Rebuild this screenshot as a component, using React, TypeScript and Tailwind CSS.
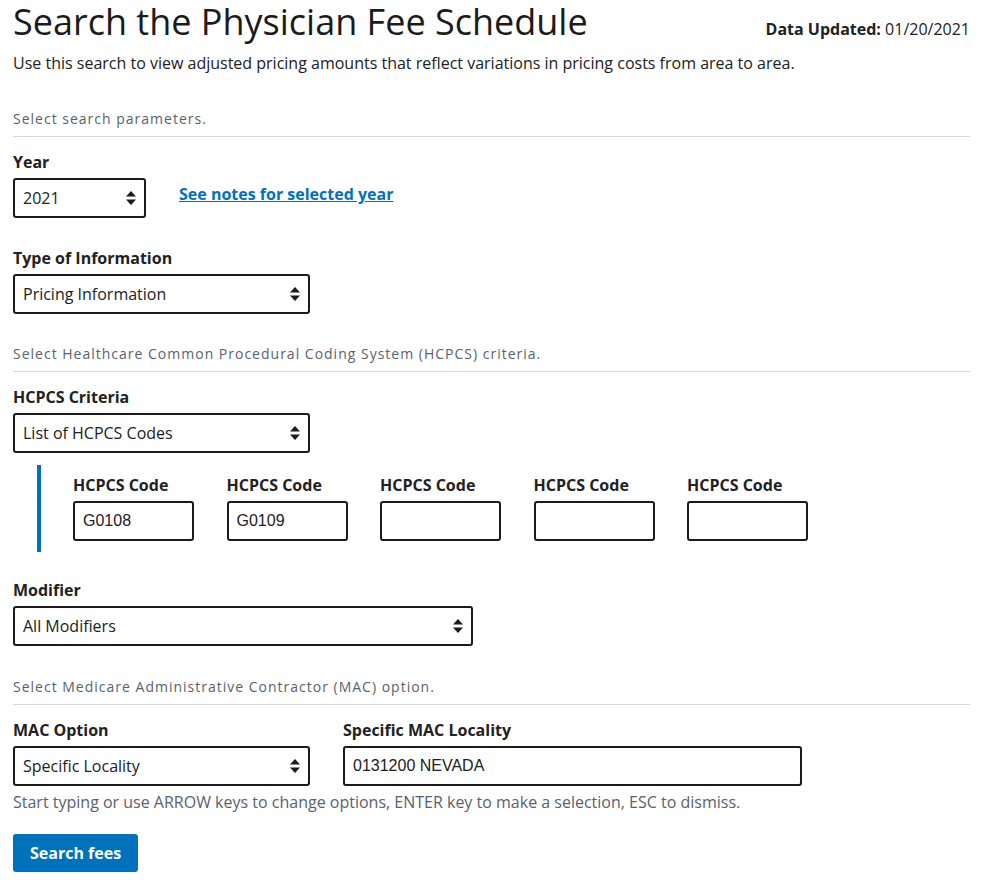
import React from 'react'

const font = { fontFamily: '"Open Sans", "Liberation Sans", sans-serif' }

function Arrows() {
  return (
    <svg width="10" height="16" viewBox="0 0 10 16" className="pointer-events-none absolute right-[10px] top-1/2 -translate-y-1/2">
      <path d="M5 1 L10 6.5 H0 Z" fill="#1b1b1b" />
      <path d="M5 15 L10 9.5 H0 Z" fill="#1b1b1b" />
    </svg>
  )
}

function Select({ value, width }: { value: string; width: string }) {
  return (
    <div className={`relative ${width}`}>
      <select
        defaultValue={value}
        className="h-10 w-full appearance-none rounded-[3px] border-2 border-[#1b1b1b] bg-white pl-2 pr-8 text-base text-[#212121] outline-none"
      >
        <option>{value}</option>
      </select>
      <Arrows />
    </div>
  )
}

function Label({ children }: { children: React.ReactNode }) {
  return <label className="block text-base font-bold leading-6 text-[#212121]">{children}</label>
}

function SectionHead({ children }: { children: React.ReactNode }) {
  return (
    <div className="border-b border-[#d6d7d9] pb-[7px] text-sm leading-5 tracking-[1px] text-[#5b616b]">
      {children}
    </div>
  )
}

function TextInput({ value, width }: { value?: string; width: string }) {
  return (
    <input
      defaultValue={value}
      className={`h-10 ${width} rounded-[3px] border-2 border-[#1b1b1b] bg-white px-2 text-base text-[#212121] outline-none`}
      style={{ fontFamily: '"Liberation Sans", Arial, sans-serif' }}
    />
  )
}

export default function App() {
  const codes = ['G0108', 'G0109', '', '', '']

  return (
    <div className="min-h-[888px] bg-white pl-[13px] pr-[12px] text-[#212121]" style={font}>
      <div className="flex items-baseline justify-between">
        <h1 className="text-[36px] leading-[44px] font-normal text-[#1b1b1b]">Search the Physician Fee Schedule</h1>
        <p className="text-base">
          <span className="font-bold">Data Updated:</span> 01/20/2021
        </p>
      </div>
      <p className="mt-[7px] text-base leading-6">
        Use this search to view adjusted pricing amounts that reflect variations in pricing costs from area to area.
      </p>

      <div className="mt-[34px]">
        <SectionHead>Select search parameters.</SectionHead>
      </div>

      <div className="mt-[13px]">
        <Label>Year</Label>
        <div className="mt-1 flex items-center">
          <Select value="2021" width="w-[133px]" />
          <a href="#" className="mb-2 ml-[33px] text-base font-bold text-[#0071bc] underline">
            See notes for selected year
          </a>
        </div>
      </div>

      <div className="mt-7">
        <Label>Type of Information</Label>
        <div className="mt-1">
          <Select value="Pricing Information" width="w-[297px]" />
        </div>
      </div>

      <div className="mt-[30px]">
        <SectionHead>Select Healthcare Common Procedural Coding System (HCPCS) criteria.</SectionHead>
      </div>

      <div className="mt-[13px]">
        <Label>HCPCS Criteria</Label>
        <div className="mt-1">
          <Select value="List of HCPCS Codes" width="w-[297px]" />
        </div>
      </div>

      <div className="ml-6 mt-3 flex gap-[32.5px] border-l-4 border-[#0071bc] pl-8 pt-2 pb-[11px]">
        {codes.map((c, i) => (
          <div key={i}>
            <Label>HCPCS Code</Label>
            <div className="mt-1">
              <TextInput value={c} width="w-[121px]" />
            </div>
          </div>
        ))}
      </div>

      <div className="mt-[26px]">
        <Label>Modifier</Label>
        <div className="mt-1">
          <Select value="All Modifiers" width="w-[460px]" />
        </div>
      </div>

      <div className="mt-[31px]">
        <SectionHead>Select Medicare Administrative Contractor (MAC) option.</SectionHead>
      </div>

      <div className="mt-[13px] flex gap-[33px]">
        <div>
          <Label>MAC Option</Label>
          <div className="mt-1">
            <Select value="Specific Locality" width="w-[297px]" />
          </div>
        </div>
        <div>
          <Label>Specific MAC Locality</Label>
          <div className="mt-1">
            <TextInput value="0131200 NEVADA" width="w-[459px]" />
          </div>
        </div>
      </div>
      <p className="mt-1 text-base leading-6 text-[#5b616b]">
        Start typing or use ARROW keys to change options, ENTER key to make a selection, ESC to dismiss.
      </p>

      <button className="mt-5 h-[38px] rounded-[3px] bg-[#0071bc] px-[17px] text-base font-bold text-white">
        Search fees
      </button>
    </div>
  )
}
